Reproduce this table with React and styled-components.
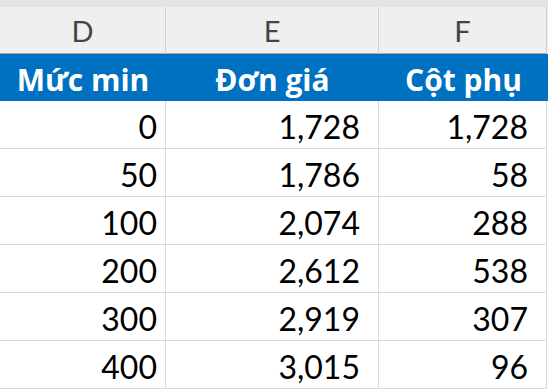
import React from 'react';
import styled, { createGlobalStyle } from 'styled-components';

const GlobalStyle = createGlobalStyle`
  html, body {
    margin: 0;
    padding: 0;
    background: #fff;
  }
  body {
    font-family: Lato, "Noto Sans", sans-serif;
  }
`;

const rows = [
  ['0', '1,728', '1,728'],
  ['50', '1,786', '58'],
  ['100', '2,074', '288'],
  ['200', '2,612', '538'],
  ['300', '2,919', '307'],
  ['400', '3,015', '96'],
];

const columns = ['D', 'E', 'F'];
const headers = ['Mức min', 'Đơn giá', 'Cột phụ'];
const pads = [8, 18, 18];

const Sheet = styled.div`
  width: 548px;
  height: 392px;
  overflow: hidden;
  background: #fff;
`;

const TopStrip = styled.div`
  height: 7px;
  background: #e3e3e3;
`;

const Row = styled.div`
  display: grid;
  grid-template-columns: 166px 213px 168px 1px;
`;

const ColHead = styled.div`
  height: 47px;
  background: #efefef;
  border-right: 1px solid #d0d0d0;
  border-bottom: 1px solid #a8a8a8;
  display: flex;
  align-items: center;
  justify-content: center;
  font-size: 29px;
  color: #444;
  padding-top: 1px;
  box-sizing: border-box;
`;

const HeadRow = styled.div`
  display: grid;
  grid-template-columns: 166px 213px 169px;
  background: #0070c0;
`;

const HeadCell = styled.div`
  height: 47px;
  display: flex;
  align-items: center;
  justify-content: center;
  padding-top: 3px;
  box-sizing: border-box;
  color: #fff;
  font-family: "Open Sans", "Noto Sans", sans-serif;
  font-weight: 700;
  font-size: 30px;
`;

const Cell = styled.div`
  height: 48px;
  box-sizing: border-box;
  border-right: 1px solid #dadada;
  border-bottom: 1px solid #dadada;
  display: flex;
  align-items: center;
  justify-content: flex-end;
  padding-right: ${(p) => p.$pad}px;
  padding-top: 4px;
  font-size: 32px;
  color: #000;
`;

const Filler = styled.div`
  background: #efefef;
`;

export default function App() {
  return (
    <Sheet>
      <GlobalStyle />
      <TopStrip />
      <Row>
        {columns.map((c) => (
          <ColHead key={c}>{c}</ColHead>
        ))}
        <Filler />
      </Row>
      <HeadRow>
        {headers.map((h) => (
          <HeadCell key={h}>{h}</HeadCell>
        ))}
      </HeadRow>
      {rows.map((r, i) => (
        <Row key={i}>
          {r.map((v, j) => (
            <Cell key={j} $pad={pads[j]}>
              {v}
            </Cell>
          ))}
        </Row>
      ))}
    </Sheet>
  );
}
